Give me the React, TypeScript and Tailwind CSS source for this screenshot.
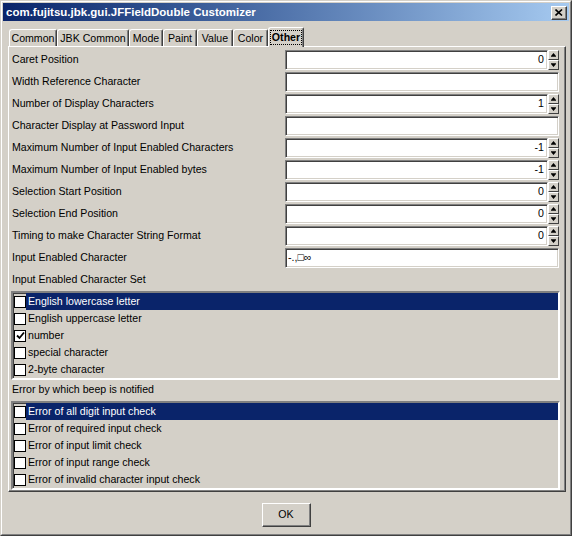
import React from "react";

type Row = { label: string; value: string; spin?: boolean; left?: boolean };

const rows: Row[] = [
  { label: "Caret Position", value: "0", spin: true },
  { label: "Width Reference Character", value: "" },
  { label: "Number of Display Characters", value: "1", spin: true },
  { label: "Character Display at Password Input", value: "" },
  { label: "Maximum Number of Input Enabled Characters", value: "-1", spin: true },
  { label: "Maximum Number of Input Enabled bytes", value: "-1", spin: true },
  { label: "Selection Start Position", value: "0", spin: true },
  { label: "Selection End Position", value: "0", spin: true },
  { label: "Timing to make Character String Format", value: "0", spin: true },
  { label: "Input Enabled Character", value: "-.,\u25a1\u221e", left: true },
];

const charSet = [
  { label: "English lowercase letter", checked: false },
  { label: "English uppercase letter", checked: false },
  { label: "number", checked: true },
  { label: "special character", checked: false },
  { label: "2-byte character", checked: false },
];

const beepSet = [
  { label: "Error of all digit input check", checked: false },
  { label: "Error of required input check", checked: false },
  { label: "Error of input limit check", checked: false },
  { label: "Error of input range check", checked: false },
  { label: "Error of invalid character input check", checked: false },
];

const tabs: [string, number][] = [
  ["Common", 48],
  ["JBK Common", 72],
  ["Mode", 34],
  ["Paint", 34],
  ["Value", 36],
  ["Color", 35],
];

function SpinBtn({ up }: { up?: boolean }) {
  return (
    <div className="h-[10px] w-full bg-[#d4d0c8] border border-t-white border-l-white border-r-[#404040] border-b-[#404040] flex items-center justify-center">
      <svg width="5" height="4" viewBox="0 0 5 4">
        <path d={up ? "M2.5 0 L5 3 L0 3 Z M0 3.2 H5 V4 H0 Z" : "M0 0 H5 V0.8 H0 Z M0 1 L5 1 L2.5 4 Z"} fill="#000" />
      </svg>
    </div>
  );
}

function Field({ value, spin, left }: { value: string; spin?: boolean; left?: boolean }) {
  return (
    <div className="flex w-[274px] h-[20px]">
      <div
        className={`flex-1 h-full bg-white border border-t-[#808080] border-l-[#808080] border-b-white border-r-white shadow-[inset_1px_1px_0_#404040,inset_-1px_-1px_0_#d4d0c8] flex items-center ${
          left ? "justify-start pl-[2px]" : "justify-end pr-[3px]"
        }`}
      >
        {value}
      </div>
      {spin && (
        <div className="flex flex-col w-[11px] h-[20px]">
          <SpinBtn up />
          <SpinBtn />
        </div>
      )}
    </div>
  );
}

function CheckList({ items }: { items: { label: string; checked: boolean }[] }) {
  return (
    <div className="w-[549px] h-[89px] bg-[#d4d0c8] border-2 border-t-[#808080] border-l-[#808080] border-b-white border-r-white shadow-[inset_1px_1px_0_#404040,inset_-1px_-1px_0_#d4d0c8] flex flex-col">
      {items.map((it, i) => (
        <div key={it.label} className="h-[17px] flex items-center pl-[1px]">
          <div className="w-[12px] h-[12px] bg-white border border-black flex items-center justify-center shrink-0">
            {it.checked && (
              <svg width="9" height="9" viewBox="0 0 9 9">
                <path d="M1 4.5 L3.5 7 L8 1.5" stroke="#000" strokeWidth="1.8" fill="none" />
              </svg>
            )}
          </div>
          <div
            className={`flex-1 h-full flex items-center pl-[2px] ${
              i === 0 ? "bg-[#0a246a] text-white" : ""
            }`}
          >
            {it.label}
          </div>
        </div>
      ))}
    </div>
  );
}

export default function App() {
  return (
    <div className="w-[572px] h-[536px] bg-[#d4d0c8] border border-t-[#d4d0c8] border-l-[#d4d0c8] border-r-[#404040] border-b-[#404040] font-['Liberation_Sans',Arial,sans-serif] text-[10.6px] text-black overflow-hidden">
      <div className="h-full border border-t-white border-l-white border-r-[#808080] border-b-[#808080] p-[1px] flex flex-col">
        {/* Title bar */}
        <div className="h-[18px] bg-linear-to-r from-[#0a246a] to-[#a6caf0] flex items-center pl-[3px] pt-[1px]">
          <span className="text-white font-bold text-[11.5px]">com.fujitsu.jbk.gui.JFFieldDouble Customizer</span>
          <div className="ml-auto mr-[2px] w-[16px] h-[14px] bg-[#d4d0c8] border border-t-white border-l-white border-r-[#404040] border-b-[#404040] shadow-[inset_-1px_-1px_0_#808080] flex items-center justify-center">
            <svg width="8" height="7" viewBox="0 0 8 7">
              <path d="M0.5 0.5 L7 6.5 M7 0.5 L0.5 6.5" stroke="#000" strokeWidth="1.6" />
            </svg>
          </div>
        </div>

        {/* Tabs */}
        <div className="flex items-end h-[19px] mt-[6px] ml-[6px]">
          {tabs.map(([t, w]) => (
            <div
              key={t}
              style={{ width: w }}
              className="h-[17px] pt-[1px] border-t border-l border-r border-t-white border-l-white border-r-[#404040] shadow-[inset_-1px_0_0_#808080] rounded-tl-[3px] rounded-tr-[2px] flex items-center justify-center"
            >
              {t}
            </div>
          ))}
          <div className="relative z-10 w-[36px] h-[20px] -mb-[1px] bg-[#d4d0c8] border-t border-l border-r border-t-white border-l-white border-r-[#404040] shadow-[inset_-1px_0_0_#808080] rounded-tl-[3px] rounded-tr-[2px] flex items-start justify-center pt-[2px]">
            <span className="font-bold border border-dotted border-black px-[1px] leading-[13px]">Other</span>
          </div>
        </div>

        {/* Panel */}
        <div className="ml-[5px] w-[558px] border border-t-white border-l-white border-r-[#404040] border-b-[#404040] shadow-[inset_-1px_-1px_0_#808080] pt-[3px] pl-[2px] pb-[1px] flex flex-col">
          <div className="flex flex-col gap-[2px]">
            {rows.map((r) => (
              <div key={r.label} className="flex items-center h-[20px]">
                <div className="w-[274px] pl-[1px]">{r.label}</div>
                <Field value={r.value} spin={r.spin} left={r.left} />
              </div>
            ))}
          </div>
          <div className="h-[20px] mt-[2px] flex items-center pl-[1px]">Input Enabled Character Set</div>
          <div className="mt-[1px]">
            <CheckList items={charSet} />
          </div>
          <div className="h-[20px] flex items-center pl-[1px]">Error by which beep is notified</div>
          <div className="mt-[1px]">
            <CheckList items={beepSet} />
          </div>
        </div>

        {/* Buttons */}
        <div className="flex justify-center pt-[11px]">
          <div className="w-[49px] h-[24px] border border-t-white border-l-white border-r-[#404040] border-b-[#404040] shadow-[inset_-1px_-1px_0_#808080] flex items-center justify-center">
            OK
          </div>
        </div>
      </div>
    </div>
  );
}
